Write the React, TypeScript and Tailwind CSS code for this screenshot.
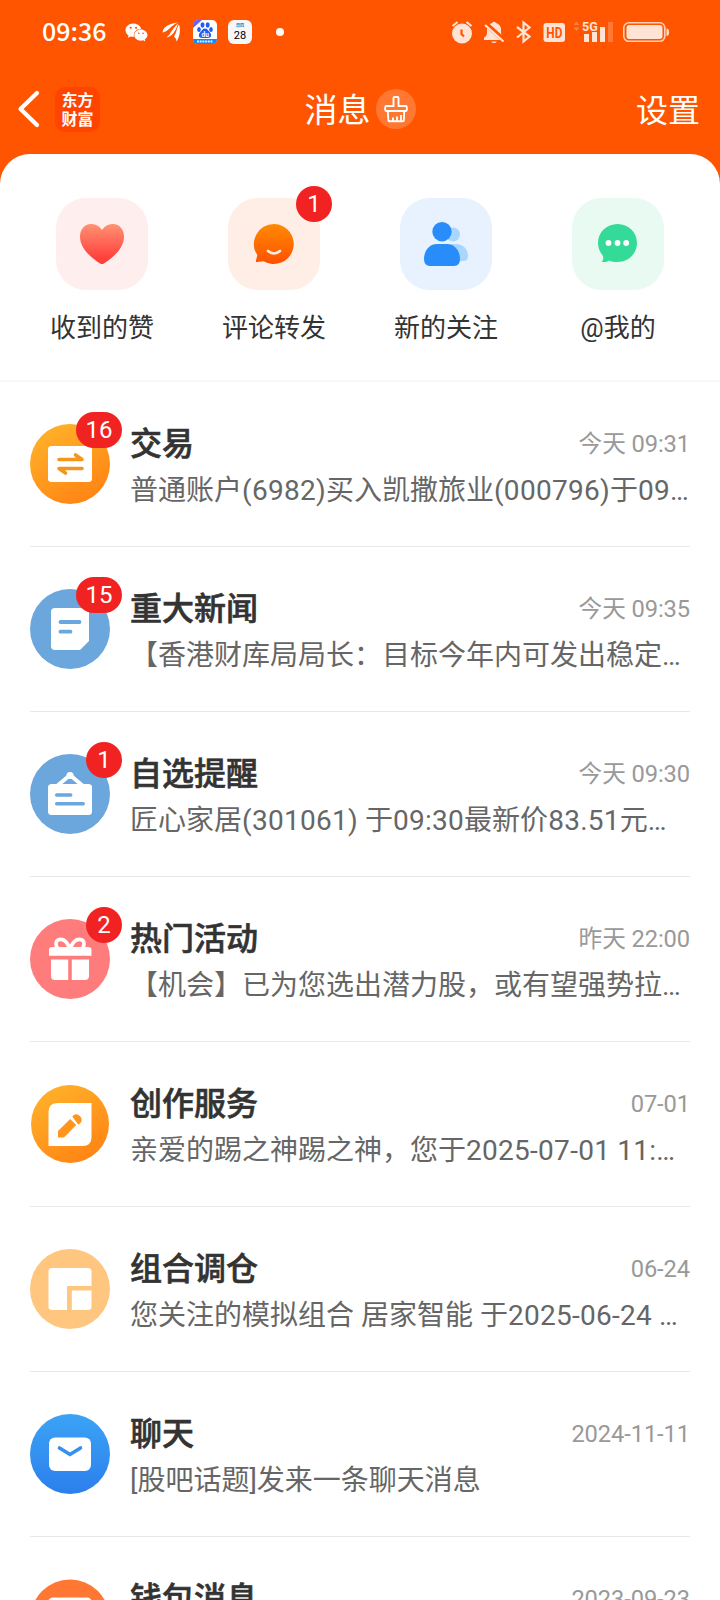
import React from 'react';
import { FaWeixin } from 'react-icons/fa';

const zh = "font-[Roboto,'Noto_Sans_CJK_SC',sans-serif]";

interface Message {
  title: string;
  time: string;
  text: string;
  badge?: string;
  icon: React.ReactNode;
}

interface Shortcut {
  label: string;
  tile: string;
  badge?: string;
  icon: React.ReactNode;
}

function Badge({ count, className = '' }: { count: string; className?: string }) {
  const width = count.length > 1 ? 'w-[46px]' : 'w-9';
  return (
    <span className={`absolute flex h-9 ${width} items-center justify-center rounded-full bg-[#f12322] text-[24px] leading-none text-white ${className}`}>
      {count}
    </span>
  );
}

// Digits and latin punctuation are set slightly looser than the Chinese text
function Preview({ text }: { text: string }) {
  return (
    <>
      {text.split(/([0-9():.\-]+)/).map((part, i) =>
        i % 2 === 1 ? <span key={i} className="tracking-[0.28px]">{part}</span> : part
      )}
    </>
  );
}

const shortcuts: Shortcut[] = [
  {
    label: '收到的赞',
    tile: 'bg-[#ffeeee]',
    icon: (
      <svg width="92" height="92" viewBox="0 0 92 92">
        <defs>
          <linearGradient id="heart" x1="0" y1="0" x2="0" y2="1">
            <stop offset="0" stopColor="#ff9272" />
            <stop offset="0.85" stopColor="#ff413d" />
          </linearGradient>
        </defs>
        <path d="M46 32C42.500 26.500 37.500 26 35 26C28.500 26 24 31.500 24 38.500C24 51 35.500 59.500 44 65.500Q46 66.700 48 65.500C56.500 59.500 68 51 68 38.500C68 31.500 63.500 26 57 26C54.500 26 49.500 26.500 46 32Z" fill="url(#heart)" />
      </svg>
    ),
  },
  {
    label: '评论转发',
    tile: 'bg-[#ffeee6]',
    badge: '1',
    icon: (
      <svg width="92" height="92" viewBox="0 0 92 92">
        <defs>
          <linearGradient id="smile" x1="0" y1="0" x2="0" y2="1">
            <stop offset="0" stopColor="#ff8a00" />
            <stop offset="1" stopColor="#ff5100" />
          </linearGradient>
        </defs>
        <path d="M46 26a20 20 0 1 1-10.500 37.200L29 64q-1.500 0-1-1.500l1.300-5.500A20 20 0 0 1 46 26Z" fill="url(#smile)" />
        <path d="M40 53q6 5 12 0" fill="none" stroke="#ffeee6" strokeWidth="2.600" strokeLinecap="round" />
      </svg>
    ),
  },
  {
    label: '新的关注',
    tile: 'bg-[#e7f2fe]',
    icon: (
      <svg width="92" height="92" viewBox="0 0 92 92">
        <circle cx="53" cy="36.500" r="7" fill="#a9d6ff" />
        <path d="M50 46h6c7 0 12 5 12 12q0 5-5 5H50Z" fill="#a9d6ff" />
        <circle cx="42" cy="33.700" r="9.700" fill="#288cfa" />
        <path d="M37 46h10c7 0 13 6 13 15q0 7-6 7H30q-6 0-6-7c0-9 6-15 13-15Z" fill="#288cfa" />
      </svg>
    ),
  },
  {
    label: '@我的',
    tile: 'bg-[#e8faf1]',
    icon: (
      <svg width="92" height="92" viewBox="0 0 92 92">
        <path d="M45.500 26c11 0 19.500 8.500 19.500 19s-8.500 19-19.500 19c-3.500 0-6-.5-8.500-1.500-2 1.500-5 2-7.300 1.200 1.800-1.500 1.800-3.700 1.300-5.700C28 54.500 26 50 26 45c0-10.500 8.500-19 19.500-19Z" fill="#34da98" />
        <circle cx="36.500" cy="45" r="2.900" fill="#fff" />
        <circle cx="45.500" cy="45" r="2.900" fill="#fff" />
        <circle cx="54.200" cy="45" r="2.900" fill="#fff" />
      </svg>
    ),
  },
];

const messages: Message[] = [
  {
    title: '交易',
    time: '今天 09:31',
    text: '普通账户(6982)买入凯撒旅业(000796)于09…',
    badge: '16',
    icon: (
      <svg width="80" height="80" viewBox="0 0 80 80">
        <defs>
          <linearGradient id="trade" x1="0.200" y1="0" x2="0.800" y2="1">
            <stop offset="0" stopColor="#ffb22a" />
            <stop offset="1" stopColor="#ff8213" />
          </linearGradient>
        </defs>
        <circle cx="40" cy="40" r="40" fill="url(#trade)" />
        <rect x="18" y="22" width="44" height="36" rx="3.500" fill="#fff" />
        <path d="M29 35.500H52L45.500 31M52 44.500H29L35.500 49" fill="none" stroke="#f3951f" strokeWidth="3.600" strokeLinecap="round" strokeLinejoin="round" />
      </svg>
    ),
  },
  {
    title: '重大新闻',
    time: '今天 09:35',
    text: '【香港财库局局长：目标今年内可发出稳定…',
    badge: '15',
    icon: (
      <svg width="80" height="80" viewBox="0 0 80 80">
        <circle cx="40" cy="40" r="40" fill="#6ba6dc" />
        <path d="M25 19h30q4 0 4 4v29l-9 9H25q-4 0-4-4V23q0-4 4-4Z" fill="#fff" />
        <path d="M30.500 33h19M30.500 42.700h10" stroke="#6ba6dc" strokeWidth="3.800" strokeLinecap="round" />
      </svg>
    ),
  },
  {
    title: '自选提醒',
    time: '今天 09:30',
    text: '匠心家居(301061) 于09:30最新价83.51元…',
    badge: '1',
    icon: (
      <svg width="80" height="80" viewBox="0 0 80 80">
        <circle cx="40" cy="40" r="40" fill="#6ba6dc" />
        <path d="M27 32 40 21l13 11" fill="none" stroke="#fff" strokeWidth="4" />
        <circle cx="40" cy="21.500" r="3.600" fill="#fff" />
        <rect x="18" y="30" width="44" height="31" rx="3.500" fill="#fff" />
        <path d="M26.700 41h14M26.700 49.700h26.500" stroke="#6ba6dc" strokeWidth="3.500" strokeLinecap="round" />
      </svg>
    ),
  },
  {
    title: '热门活动',
    time: '昨天 22:00',
    text: '【机会】已为您选出潜力股，或有望强势拉…',
    badge: '2',
    icon: (
      <svg width="80" height="80" viewBox="0 0 80 80">
        <circle cx="40" cy="40" r="40" fill="#ff7c7d" />
        <path d="M39.500 29C37 22.500 33 20 29.500 20.500c-4 .8-4.500 5-2 8.500M40.500 29C43 22.500 47 20 50.500 20.500c4 .8 4.500 5 2 8.500" fill="none" stroke="#fff" strokeWidth="3.600" />
        <path d="M22 28h36q3.500 0 3.500 3v5.700H19V31q0-3 3-3ZM21 40.500h17.200V61H25q-4 0-4-4ZM41.800 40.500H59V57q0 4-4 4H41.800Z" fill="#fff" />
      </svg>
    ),
  },
  {
    title: '创作服务',
    time: '07-01',
    text: '亲爱的踢之神踢之神，您于2025-07-01 11:…',
    icon: (
      <svg width="80" height="80" viewBox="0 0 80 80">
        <defs>
          <linearGradient id="create" x1="0.200" y1="0" x2="0.800" y2="1">
            <stop offset="0" stopColor="#ffb22a" />
            <stop offset="1" stopColor="#ff8213" />
          </linearGradient>
        </defs>
        <circle cx="40" cy="40" r="39" fill="url(#create)" />
        <path d="M28 19h33.500v34q0 9-9 9H18.500V28q0-9 9.500-9Z" fill="#fff" />
        <path d="M28 47 40.200 35l6 6-12.200 12.500H28ZM42.300 32.500l2-1.700q3-1.500 6 1.700 2.500 3 .5 6l-2.500 2.200Z" fill="#ff951c" />
      </svg>
    ),
  },
  {
    title: '组合调仓',
    time: '06-24',
    text: '您关注的模拟组合 居家智能 于2025-06-24 …',
    icon: (
      <svg width="80" height="80" viewBox="0 0 80 80">
        <circle cx="40" cy="40" r="40" fill="#ffc680" />
        <path d="M22 19h36q3.500 0 3.500 3.500V37H37v24H22q-3.500 0-3.500-3.500v-35Q18.500 19 22 19ZM41.800 41.500h19.700v16q0 3.500-3.500 3.500H41.800Z" fill="#fff" />
      </svg>
    ),
  },
  {
    title: '聊天',
    time: '2024-11-11',
    text: '[股吧话题]发来一条聊天消息',
    icon: (
      <svg width="80" height="80" viewBox="0 0 80 80">
        <defs>
          <linearGradient id="chat" x1="0" y1="0" x2="0" y2="1">
            <stop offset="0" stopColor="#3ba3f6" />
            <stop offset="1" stopColor="#2c7feb" />
          </linearGradient>
        </defs>
        <circle cx="40" cy="40" r="40" fill="url(#chat)" />
        <rect x="19" y="23.500" width="42" height="33.500" rx="6" fill="#fff" />
        <path d="M29.500 34 40 40.500 50.500 34" fill="none" stroke="#3590ee" strokeWidth="3.600" strokeLinecap="round" />
      </svg>
    ),
  },
  {
    title: '钱包消息',
    time: '2023-09-23',
    text: '',
    icon: (
      <svg width="80" height="80" viewBox="0 0 80 80">
        <circle cx="40" cy="40" r="39.500" fill="#ff7733" />
        <rect x="18" y="18.500" width="44" height="40" rx="5" fill="#fff" />
      </svg>
    ),
  },
];

function StatusBar() {
  return (
    <div className="flex h-16 items-center text-white">
      <span className="mb-[3px] ml-[42px] w-[83px] font-['Noto_Sans_CJK_SC',sans-serif] text-[25px] font-medium leading-none">09:36</span>
      <FaWeixin size={23} />
      <svg className="ml-[14px]" width="19" height="20" viewBox="0 0 19 20" fill="#fff">
        <path d="M.5 10.500C1 5 7 1.500 16 .5 12 2 10 4 7.500 6.500 5 9 3 10 .5 10.500Z" />
        <path d="M4.500 15.500C9 12 10.500 5.500 16.500 1.500 15 4 14 8 11.500 11 9.500 13.500 7 15 4.500 15.500Z" />
        <path d="M12 14.500C14.500 11 14.500 6 17 2.500c1.500 4 1.500 11-2.500 17Q14 16 12 14.500Z" />
      </svg>
      <svg className="ml-3" width="24" height="24" viewBox="0 0 24 24">
        <rect width="24" height="24" rx="5" fill="#fff" />
        <path d="M0 8V5q0-5 5-5h4Z" fill="#6a63f5" />
        <path d="M0 19h24q0 5-5 5H5q-5 0-5-5Z" fill="#1288f5" />
        <g fill="#255cf0">
          <ellipse cx="9.500" cy="5" rx="2" ry="2.700" />
          <ellipse cx="14.700" cy="5" rx="2" ry="2.700" />
          <ellipse cx="6" cy="9.500" rx="1.800" ry="2.500" />
          <ellipse cx="18" cy="9.500" rx="1.800" ry="2.500" />
          <path d="M12 8.500c2.500 0 3 2 4.500 3.500 3 3 1.500 6-1.500 6H9c-3 0-4.500-3-1.500-6C9 10.500 9.500 8.500 12 8.500Z" />
        </g>
        <text x="12.200" y="16.500" fill="#fff" fontSize="6.500" fontWeight="700" textAnchor="middle" fontFamily="Roboto">du</text>
        <path d="M4 21.500h16" stroke="#d7ecff" strokeWidth="2" strokeDasharray="2 .7" />
      </svg>
      <span className="ml-[11px] flex size-6 flex-col items-center rounded-[6px] bg-[#f5f7f9] leading-none text-black">
        <span className="mt-[3px] h-[7px] text-[4px] font-bold leading-[6px] text-[#1683c4]">周四</span>
        <span className="text-[11px] leading-none">28</span>
      </span>
      <span className="ml-6 size-2 rounded-full bg-white" />
      <svg className="ml-auto mr-[51px]" width="218" height="24" viewBox="0 0 218 24" fill="#ffe4d6">
        <circle cx="11" cy="13.500" r="10" />
        <path d="M1.500 6 6.500 2M15.500 2 20.500 6" stroke="#ffe4d6" strokeWidth="2.200" />
        <path d="M10.500 9.500V14l2.500 2.500" fill="none" stroke="#ff5500" strokeWidth="2.200" />
        <path d="M33 20v-2.500q3-1.500 3-5V10q0-5.500 5-7 2-2.500 4 0 5 1.500 5 7v2.500q0 3.500 2.500 5V20ZM40 21.500h6q-3 3-6 0Z" />
        <path d="M32 1.500 54 21" stroke="#ff5500" strokeWidth="5" />
        <path d="M34 5 52.500 21.500" stroke="#ffe4d6" strokeWidth="2.200" />
        <path d="M66 7 78.500 16.500 72.500 21.500v-19L78.500 7.500 66 17.500" fill="none" stroke="#ffe4d6" strokeWidth="2.200" />
        <rect x="92.500" y="3" width="21.500" height="19" rx="3" />
        <text x="103.300" y="17.700" fill="#ff5500" fontSize="15" fontWeight="700" textAnchor="middle" fontFamily="Roboto" textLength="16" lengthAdjust="spacingAndGlyphs">HD</text>
        <path d="m122.500 5 3-3.500 3 3.500ZM122.500 7.500h6l-3 3.500Z" opacity=".3" />
        <text x="131" y="11" fontSize="12.500" fontWeight="700" fontFamily="Roboto">5G</text>
        <path d="M133 14h5v8h-5ZM141 12h5v10h-5ZM149 7h5v15h-5Z" />
        <path d="M157 2h5v20h-5Z" opacity=".25" />
        <rect x="172.800" y="2.800" width="41" height="18.500" rx="5" fill="none" stroke="#ffd0b5" strokeWidth="1.600" />
        <rect x="175.500" y="5" width="36" height="14" rx="3" />
        <path d="M215.500 8.500q2.500 0 2.500 3.700t-2.500 3.700Z" />
      </svg>
    </div>
  );
}

function NavBar() {
  return (
    <div className="grid h-[90px] grid-cols-3 items-center text-white">
      <div className="flex items-center">
        <svg className="ml-[17px]" width="23" height="38" viewBox="0 0 23 38">
          <path d="M20 3 3.500 19 20 35" fill="none" stroke="#fff" strokeWidth="4.200" strokeLinecap="round" strokeLinejoin="round" />
        </svg>
        <div className="ml-[15px] flex size-[45px] flex-col items-center justify-center rounded-[10px] bg-[#ff4400] font-['Noto_Sans_CJK_SC',sans-serif] text-[16px] font-bold">
          <span className="h-[19px] leading-[19px]">东方</span>
          <span className="h-[19px] leading-[19px]">财富</span>
        </div>
      </div>
      <div className="flex items-center justify-center gap-[5px]">
        <span className="mt-[3px] text-[33px] leading-none">消息</span>
        <svg width="40" height="40" viewBox="0 0 40 40">
          <circle cx="20" cy="20" r="20" fill="#ff7730" />
          <path d="M17.500 17V9q0-1 1-1h3q1 0 1 1v8h7q1.300 0 1.300 1.300v2.400q0 1.300-1.300 1.300H10.500q-1.300 0-1.300-1.300v-2.400Q9.200 17 10.500 17ZM11.800 22l.5 9q0 1.300 1.300 1.300h13q1.300 0 1.300-1.300l.3-9M17 32v-3.500M21 32v-4.500M25 32v-6" fill="none" stroke="#fff" strokeWidth="1.900" />
        </svg>
      </div>
      <span className="mr-[20px] mt-[3px] text-right text-[32px] leading-none">设置</span>
    </div>
  );
}

function MessageRow({ message }: { message: Message }) {
  return (
    <div className="mx-[30px] flex h-[165px] shrink-0 border-b border-[#e8e8e8] pt-[42px]">
      <div className="relative size-20 shrink-0">
        {message.icon}
        {message.badge && <Badge count={message.badge} className="-right-3 -top-3" />}
      </div>
      <div className="ml-5 min-w-0 flex-1">
        <div className="flex h-10 items-center justify-between">
          <span className="text-[32px] font-medium leading-10 text-[#333] [-webkit-text-stroke:0.6px_#333]">{message.title}</span>
          <span className="text-[23.700px] leading-10 tracking-[-0.1px] text-[#999]">{message.time}</span>
        </div>
        <p className="mt-[7px] whitespace-nowrap text-[28px] leading-10 text-[#666]">
          <Preview text={message.text} />
        </p>
      </div>
    </div>
  );
}

export default function App() {
  return (
    <div className={`h-[1600px] w-[720px] overflow-hidden bg-[#ff5500] ${zh}`}>
      <StatusBar />
      <NavBar />
      <main className="flex h-[1446px] flex-col overflow-hidden rounded-t-[30px] bg-white">
        <div className="flex h-[228px] shrink-0 border-b-2 border-[#f7f7f7] px-4 pt-11">
          {shortcuts.map(item => (
            <div key={item.label} className="flex flex-1 flex-col items-center">
              <div className={`relative size-[92px] rounded-[30px] ${item.tile}`}>
                {item.icon}
                {item.badge && <Badge count={item.badge} className="-right-3 -top-3" />}
              </div>
              <span className="mt-[18px] text-[26px] leading-10 text-[#333]">{item.label}</span>
            </div>
          ))}
        </div>
        {messages.map(message => (
          <MessageRow key={message.title} message={message} />
        ))}
      </main>
    </div>
  );
}
